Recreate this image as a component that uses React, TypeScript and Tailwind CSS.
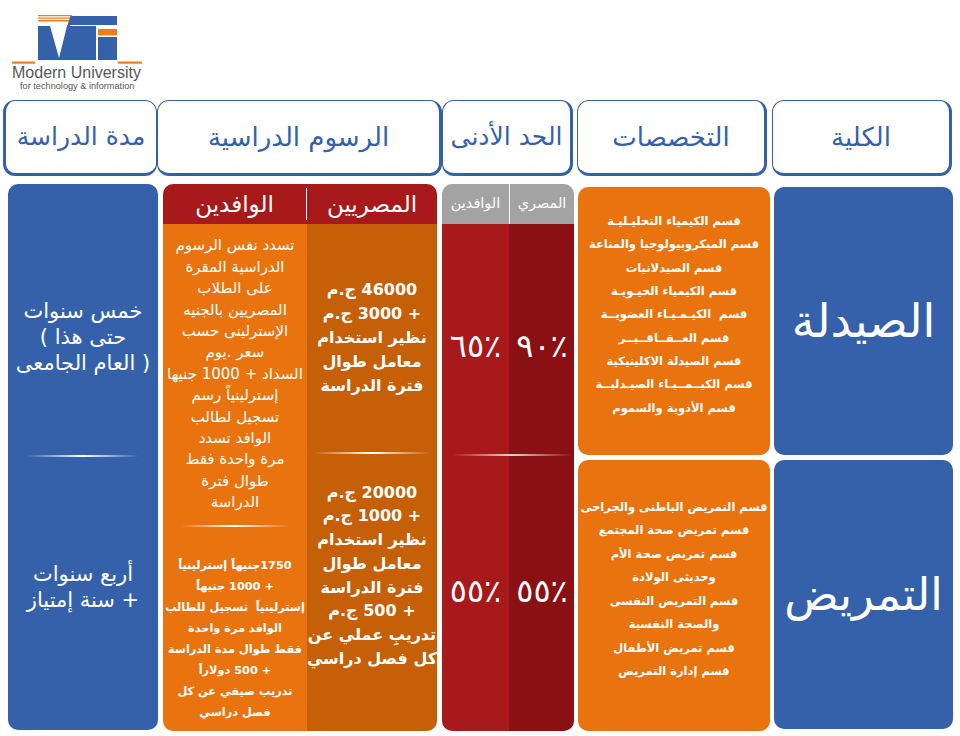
import React from "react";

const AR = { fontFamily: '"DejaVu Sans", sans-serif' };

function Sep({ className = "" }: { className?: string }) {
  return (
    <div
      className={`h-[2px] bg-gradient-to-r from-transparent via-white to-transparent ${className}`}
    />
  );
}

function Logo() {
  return (
    <div className="h-[100px] pl-[12px] pt-[15px]">
      <svg width="132" height="49" viewBox="0 0 132 49">
        <polygon points="26,0 60,0 59.5,1.3 26,1.3" fill="#f07c1c" />
        <polygon points="26,2.4 59,2.4 58.4,3.8 26,3.8" fill="#f07c1c" />
        <polygon points="26,4.9 58,4.9 57.4,6.4 26,6.4" fill="#f07c1c" />
        <polygon points="58.5,1 105,1 105,10 55.5,10" fill="#3561aa" />
        <polygon points="26,11 84,11 84,45 26,45" fill="#3561aa" />
        <polygon points="55.5,10 58,10 58,11 55,11" fill="#3561aa" />
        <polygon points="38,11 55,11 47,43" fill="#ffffff" />
        <rect x="86" y="14" width="19" height="6.5" fill="#f07c1c" />
        <rect x="86" y="22" width="19" height="23" fill="#3561aa" />
        <rect x="0" y="46.5" width="23" height="2.2" fill="#f07c1c" />
        <rect x="106" y="46.5" width="24" height="2.2" fill="#f07c1c" />
      </svg>
      <div
        className="text-[16px] leading-[16px] text-[#585858] mt-[1px]"
        style={{ fontFamily: '"Liberation Sans", sans-serif' }}
      >
        Modern University
      </div>
      <div
        className="text-[9.2px] leading-[11px] text-[#585858] pl-[8px]"
        style={{ fontFamily: '"Liberation Sans", sans-serif' }}
      >
        for technology &amp; information
      </div>
    </div>
  );
}

function HeadBox({
  text,
  className,
}: {
  text: string;
  className: string;
}) {
  return (
    <div
      className={`h-[76px] bg-white border border-[#3561aa] rounded-[12px] flex items-center justify-center text-[#3561aa] ${className}`}
      dir="rtl"
      style={AR}
    >
      {text}
    </div>
  );
}

export default function App() {
  const spec1 = [
    "قسم الكيمياء التحليـليـة",
    "قسم الميكروبيولوجيا والمناعة",
    "قسم الصيدلانيات",
    "قسم الكيمياء الحيـويـة",
    "قسم  الكيـمـيـاء العضويــة",
    "قسم العــقــاقــيــر",
    "قسم الصيدلة الاكلينيكية",
    "قسم الكيــمــيـاء الصيـدليــة",
    "قسم الأدوية والسموم",
  ];
  const spec2 = [
    "قسم التمريض الباطنى والجراحى",
    "قسم تمريض صحة المجتمع",
    "قسم تمريض صحة الأم",
    "وحديثى الولادة",
    "قسم التمريض النفسى",
    "والصحة النفسية",
    "قسم تمريض الأطفال",
    "قسم إدارة التمريض",
  ];
  const wafd1 = [
    "تسدد نفس الرسوم",
    "الدراسية المقرة",
    "على الطلاب",
    "المصريين بالجنيه",
    "الإسترلينى حسب",
    "سعر .يوم",
    "السداد + 1000 جنيها",
    "إسترلينياً رسم",
    "تسجيل لطالب",
    "الوافد تسدد",
    "مرة واحدة فقط",
    "طوال فترة",
    "الدراسة",
  ];
  const wafd2 = [
    "1750جنيهاً إسترلينياً",
    "+ 1000 جنيهاً",
    "إسترلينياً  تسجيل للطالب",
    "الوافد مرة واحدة",
    "فقط طوال مدة الدراسة",
    "+ 500 دولاراً",
    "تدريب صيفي عن كل",
    "فصل دراسي",
  ];
  const masr1 = [
    "46000 ج.م",
    "+ 3000 ج.م",
    "نظير استخدام",
    "معامل طوال",
    "فترة الدراسة",
  ];
  const masr2 = [
    "20000 ج.م",
    "+ 1000 ج.م",
    "نظير استخدام",
    "معامل طوال",
    "فترة الدراسة",
    "+ 500 ج.م",
    "تدريبِ عملي عن",
    "كل فصل دراسي",
  ];

  return (
    <div className="w-[960px] h-[736px] bg-white overflow-hidden" style={AR}>
      <Logo />

      {/* Header row */}
      <div className="flex">
        <HeadBox
          text="مدة الدراسة"
          className="ml-[3px] w-[154px] border-l-[3px] border-b-[3px] text-[25px]"
        />
        <HeadBox
          text="الرسوم الدراسية"
          className="w-[285px] border-r-[3px] border-b-[3px] text-[26px]"
        />
        <HeadBox
          text="الحد الأدنى"
          className="w-[131px] border-r-[3px] border-b-[3px] text-[25px]"
        />
        <HeadBox
          text="التخصصات"
          className="ml-[4px] w-[190px] border-r-[3px] border-b-[3px] text-[26px]"
        />
        <HeadBox
          text="الكلية"
          className="ml-[5px] w-[180px] border-r-[3px] border-b-[3px] text-[26px]"
        />
      </div>

      {/* Body row */}
      <div className="flex mt-[8px] text-white" dir="ltr">
        {/* Duration */}
        <div className="ml-[8px] w-[150px] h-[546px] bg-[#3561aa] rounded-[10px] flex flex-col" dir="rtl">
          <div className="h-[271px] flex flex-col items-center justify-center pt-[34px] text-[21px] leading-[26px] text-center">
            <div className="whitespace-nowrap">خمس سنوات</div>
            <div className="whitespace-nowrap">حتى هذا )</div>
            <div className="whitespace-nowrap">( العام الجامعى</div>
          </div>
          <Sep className="mx-[19px]" />
          <div className="flex-1 flex flex-col items-center justify-center pb-[14px] text-[21px] leading-[26px] text-center">
            <div>أربع سنوات</div>
            <div>+ سنة إمتياز</div>
          </div>
        </div>

        {/* Fees */}
        <div className="ml-[5px] w-[274px] h-[547px] rounded-[10px] overflow-hidden flex flex-col">
          <div className="h-[40px] bg-[#a8191b] flex items-stretch" dir="ltr">
            <div className="w-[143px] flex items-center justify-center text-[23px]" dir="rtl">
              الوافدين
            </div>
            <div className="w-[1px] bg-white my-[4px]" />
            <div className="flex-1 flex items-center justify-center text-[23px]" dir="rtl">
              المصريين
            </div>
          </div>
          <div className="flex-1 flex" dir="ltr">
            <div className="w-[144px] bg-[#e9740f] flex flex-col" dir="rtl">
              <div className="h-[301px] flex flex-col items-center justify-center text-[15px] leading-[21.4px] text-center">
                {wafd1.map((t, i) => (
                  <div key={i} className="whitespace-nowrap">{t}</div>
                ))}
              </div>
              <Sep className="mx-[18px]" />
              <div className="flex-1 flex flex-col items-center justify-center pt-[20px] text-[11.3px] leading-[21px] font-bold text-center">
                {wafd2.map((t, i) => (
                  <div key={i} className="whitespace-pre">{t}</div>
                ))}
              </div>
            </div>
            <div className="flex-1 bg-[#c55f08] flex flex-col" dir="rtl">
              <div className="h-[228px] flex flex-col items-center justify-center text-[16px] leading-[24px] font-bold text-center">
                {masr1.map((t, i) => (
                  <div key={i} className="whitespace-nowrap">{t}</div>
                ))}
              </div>
              <Sep className="mx-[6px]" />
              <div className="flex-1 flex flex-col items-center justify-center pb-[34px] text-[16px] leading-[23.7px] font-bold text-center">
                {masr2.map((t, i) => (
                  <div key={i} className="whitespace-nowrap">{t}</div>
                ))}
              </div>
            </div>
          </div>
        </div>

        {/* Minimum */}
        <div className="ml-[5px] w-[132px] h-[547px] rounded-[10px] overflow-hidden flex flex-col relative">
          <div className="h-[40px] bg-[#a3a3a3] flex items-stretch">
            <div className="w-[67px] flex items-center justify-center text-[14.5px]" dir="rtl">
              الوافدين
            </div>
            <div className="w-[1px] bg-white" />
            <div className="flex-1 flex items-center justify-center text-[14.5px]" dir="rtl">
              المصري
            </div>
          </div>
          <div className="flex-1 flex">
            <div className="w-[67px] bg-[#a8191b] flex flex-col">
              <div className="h-[231px] flex items-center justify-center pt-[12px] text-[32px]">
                ٦٥٪
              </div>
              <div className="flex-1 flex items-center justify-center pb-[4px] text-[32px]">
                ٥٥٪
              </div>
            </div>
            <div className="w-[1px] bg-[#8a1014]" />
            <div className="flex-1 bg-[#8a1014] flex flex-col">
              <div className="h-[231px] flex items-center justify-center pt-[12px] text-[32px]">
                ٩٠٪
              </div>
              <div className="flex-1 flex items-center justify-center pb-[4px] text-[32px]">
                ٥٥٪
              </div>
            </div>
          </div>
          <Sep className="absolute left-[10px] right-[2px] top-[270px] opacity-80" />
        </div>

        {/* Specializations */}
        <div className="ml-[4px] w-[192px] flex flex-col pt-[3px]" dir="rtl">
          <div className="h-[268px] bg-[#e9740f] rounded-[10px] flex flex-col items-center justify-center pb-[12px] text-[11.5px] leading-[23.3px] font-bold text-center">
            {spec1.map((t, i) => (
              <div key={i} className="whitespace-pre">{t}</div>
            ))}
          </div>
          <div className="mt-[5px] h-[271px] bg-[#e9740f] rounded-[10px] flex flex-col items-center justify-center pb-[12px] text-[11.5px] leading-[23.5px] font-bold text-center">
            {spec2.map((t, i) => (
              <div key={i} className="whitespace-nowrap">{t}</div>
            ))}
          </div>
        </div>

        {/* Faculty */}
        <div className="ml-[4px] w-[179px] flex flex-col pt-[3px]" dir="rtl">
          <div className="h-[268px] bg-[#3561aa] rounded-[10px] flex items-center justify-center text-[46px]">
            الصيدلة
          </div>
          <div className="mt-[5px] h-[269px] bg-[#3561aa] rounded-[10px] flex items-center justify-center text-[45px]">
            التمريض
          </div>
        </div>
      </div>
    </div>
  );
}
